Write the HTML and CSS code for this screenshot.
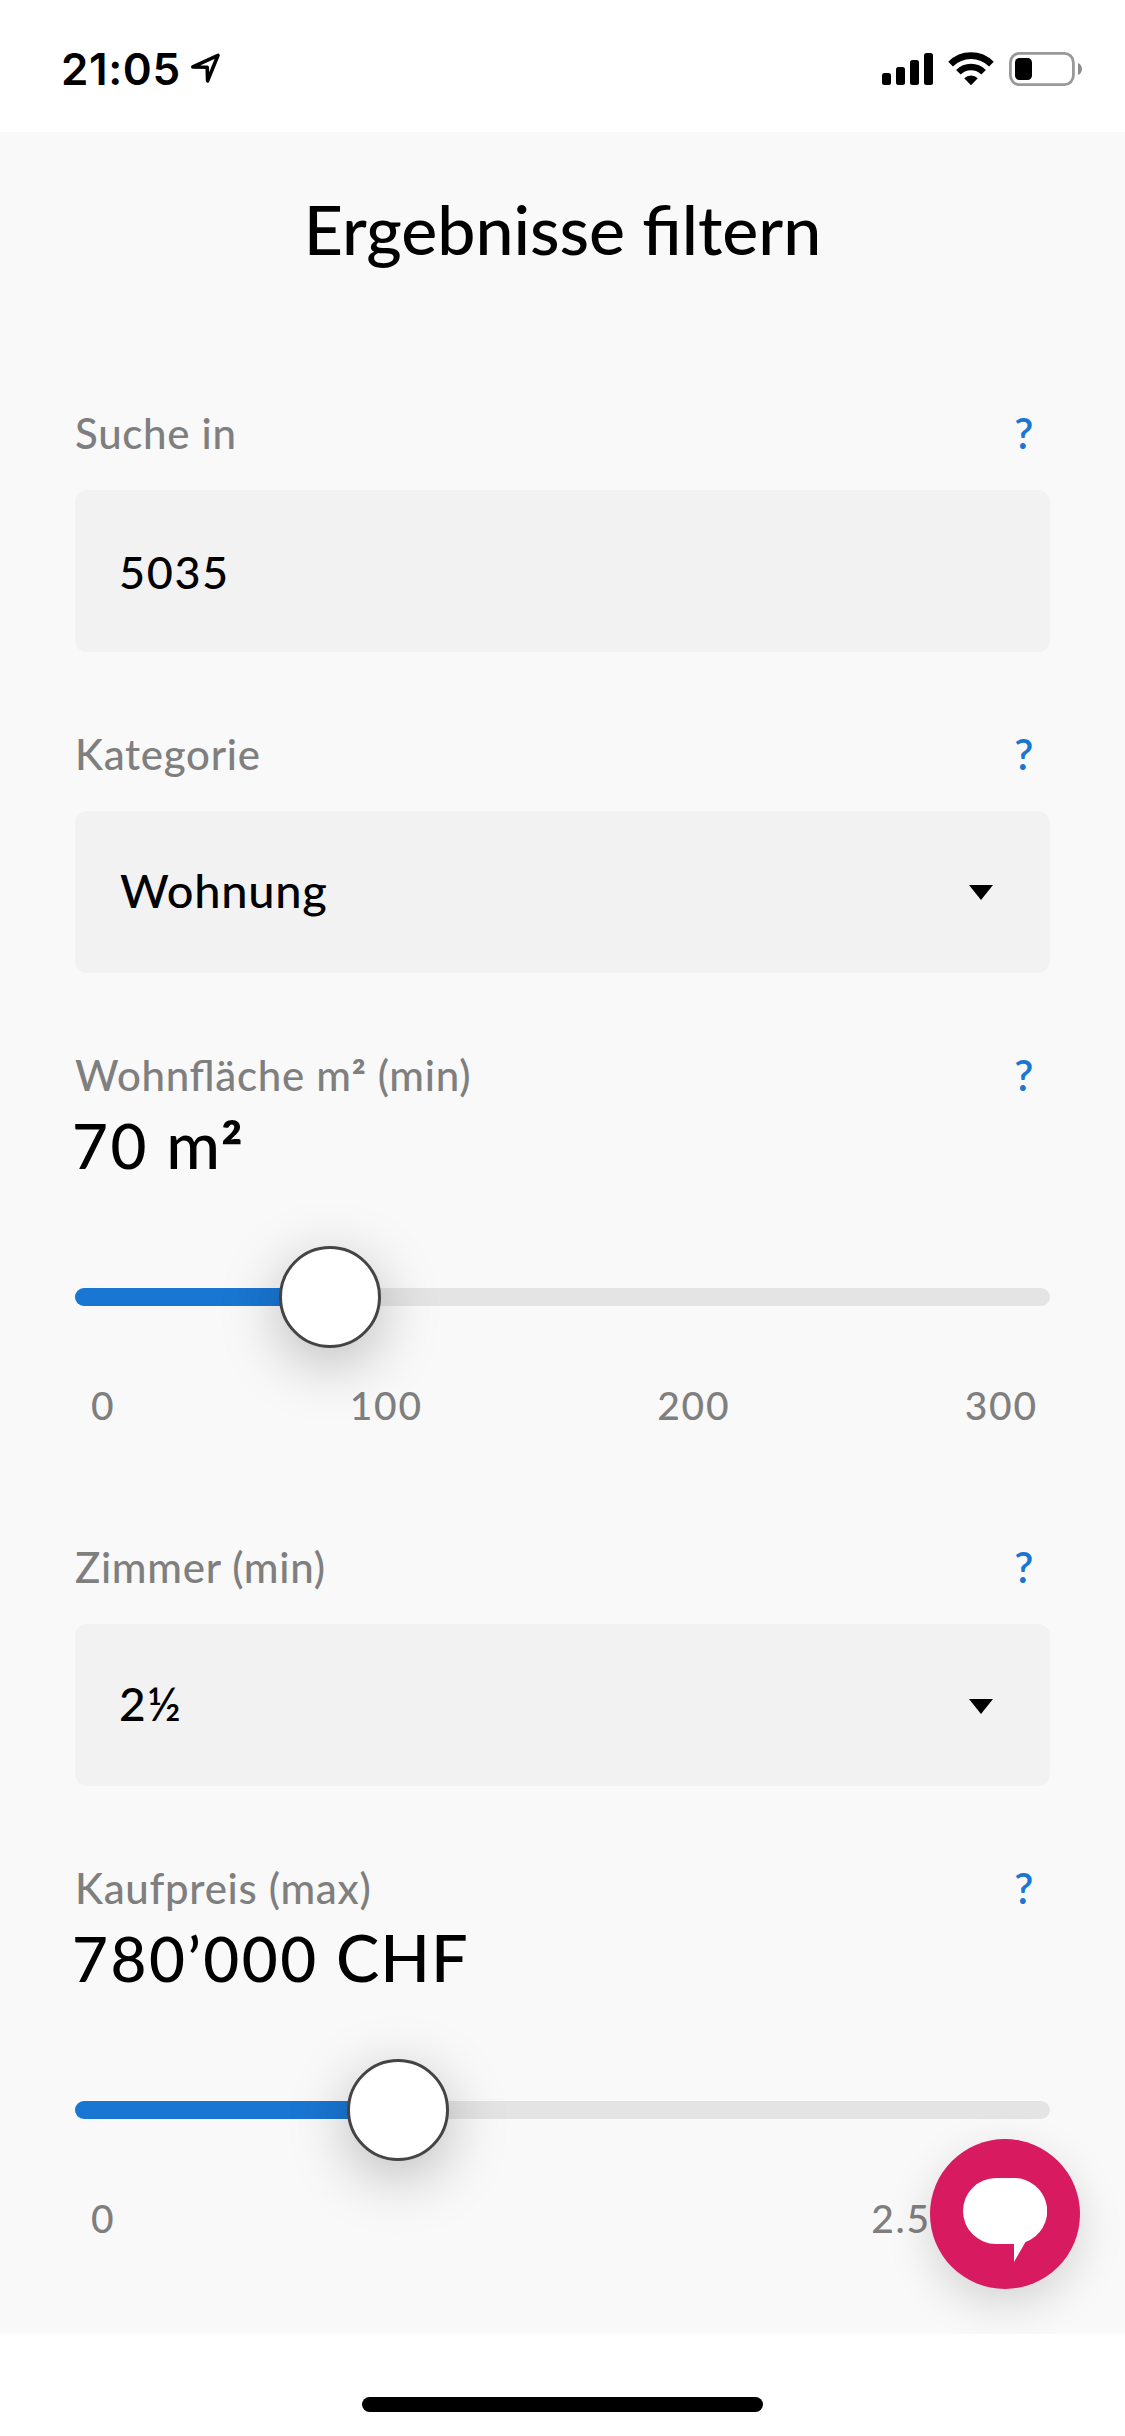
FILE: index.html
```
<!DOCTYPE html>
<html lang="de">
<head>
<meta charset="utf-8">
<title>Ergebnisse filtern</title>
<link rel="stylesheet" href="styles.css">
</head>
<body>
<header class="status">
  <div class="status-left">
    <span class="time">21:05</span>
    <svg class="location" width="30" height="30" viewBox="0 0 30 30"><path d="M1.8 13.9 27 2.4 16.6 27.8 16.2 14.2z" fill="none" stroke="#000" stroke-width="3.6" stroke-linejoin="round"/></svg>
  </div>
  <div class="status-right">
    <svg width="51" height="33" viewBox="0 0 51 33"><rect x="0" y="21" width="9" height="12" rx="2.5"/><rect x="14" y="15" width="9" height="18" rx="2.5"/><rect x="28" y="8" width="9" height="25" rx="2.5"/><rect x="42" y="1" width="9" height="32" rx="2.5"/></svg>
    <svg width="46" height="33" viewBox="0 0 46 33"><g fill="none" stroke="#000"><path d="M2.6 12.1a28.8 28.8 0 0 1 40.8 0" stroke-width="6.6"/><path d="M10.4 20.2a17.8 17.8 0 0 1 25.2 0" stroke-width="6.4"/></g><path d="M16.2 26.3a9.6 9.6 0 0 1 13.6 0L23 33.3z"/></svg>
    <svg width="73" height="34" viewBox="0 0 73 34"><rect x="1.4" y="1.4" width="63" height="31.2" rx="9" fill="none" stroke="#999" stroke-width="2.8"/><rect x="6" y="6" width="17" height="22" rx="4.5"/><path d="M69 11c5.3 2 5.3 10 0 12z" fill="#8c8c8c"/></svg>
  </div>
</header>

<main class="filters">
  <h1 class="title">Ergebnisse filtern</h1>

  <section class="field">
    <div class="label-row"><span>Suche in</span><a class="help">?</a></div>
    <div class="box code">5035</div>
  </section>

  <section class="field">
    <div class="label-row"><span>Kategorie</span><a class="help">?</a></div>
    <div class="box">Wohnung<svg class="caret" width="24" height="15" viewBox="0 0 24 15"><path d="M0 0h24L12 15z"/></svg></div>
  </section>

  <section class="field range">
    <div class="label-row"><span>Wohnfläche m<span class="square">²</span> (min)</span><a class="help">?</a></div>
    <div class="value"><span class="number">70</span> m<span class="square">²</span></div>
    <div class="slider"><div class="track"><div class="fill" style="width: 255px"></div></div><div class="thumb" style="left: 204px"></div></div>
    <div class="ticks"><span>0</span><span>100</span><span>200</span><span>300</span></div>
  </section>

  <section class="field">
    <div class="label-row"><span>Zimmer (min)</span><a class="help">?</a></div>
    <div class="box rooms">2½<svg class="caret" width="24" height="15" viewBox="0 0 24 15"><path d="M0 0h24L12 15z"/></svg></div>
  </section>

  <section class="field range">
    <div class="label-row"><span>Kaufpreis (max)</span><a class="help">?</a></div>
    <div class="value"><span class="number">780’000</span> CHF</div>
    <div class="slider"><div class="track"><div class="fill" style="width: 323px"></div></div><div class="thumb" style="left: 272px"></div></div>
    <div class="ticks price"><span>0</span><span>2.5</span></div>
  </section>

  <div class="chat">
    <svg width="84" height="84" viewBox="0 0 84 84"><path d="M33 0h18a33 33 0 0 1 11.500 64L51 84V66H33A33 33 0 0 1 33 0z" fill="#fff"/></svg>
  </div>
</main>

<footer class="home"><div class="home-bar"></div></footer>
</body>
</html>
```
FILE: styles.css
```
* { box-sizing: border-box; }

body {
  margin: 0;
  width: 1125px;
  height: 2436px;
  display: flex;
  flex-direction: column;
  background: #fff;
  color: #000;
  font-family: Lato, "Open Sans", sans-serif;
  font-weight: 500;
  font-feature-settings: "liga" 1;
}

.status {
  height: 132px;
  padding: 0 43px 0 61px;
  display: flex;
  justify-content: space-between;
}

.status-left { display: flex; gap: 10px; }

.time {
  font: 600 44px/54px Inter, sans-serif;
  letter-spacing: 0.6px;
  margin-top: 42px;
}

.location { margin-top: 53px; }

.status-right {
  display: flex;
  gap: 15px;
  align-items: flex-start;
  padding-top: 52px;
}

.filters {
  position: relative;
  height: 2202px;
  padding: 0 75px;
  background: #f9f9f9;
  overflow: hidden;
}

.title {
  margin: 0 0 119px;
  padding-top: 56px;
  height: 152px;
  font-size: 68px;
  line-height: 82px;
  font-weight: 500;
  text-align: center;
}

.field { margin-bottom: 72px; }
.field.range { margin-bottom: 109px; }

.label-row {
  display: flex;
  justify-content: space-between;
  padding-right: 16px;
  font-size: 42px;
  line-height: 60px;
  letter-spacing: 0.7px;
  color: #7f7f7f;
}

.help { color: #1976d2; font-weight: 600; }

.square {
  position: relative;
  top: 0.07em;
  font-weight: 700;
}

.box {
  margin-top: 27px;
  height: 162px;
  padding: 0 57px 4px 45px;
  display: flex;
  align-items: center;
  justify-content: space-between;
  border-radius: 12px;
  background: #f2f2f2;
  font-size: 47px;
  letter-spacing: 0.7px;
}

.box.code { font-size: 45px; letter-spacing: 1.6px; padding: 1px 45px 0 44px; }
.box.rooms { font-size: 46px; letter-spacing: 1.6px; padding-left: 44px; padding-bottom: 3px; }

.caret { margin-top: 5px; }

.value {
  margin: 3px 0 66px -3px;
  height: 72px;
  font-size: 65px;
  line-height: 72px;
  letter-spacing: 1px;
}

.number { font-size: 62px; letter-spacing: 2.5px; }

.slider {
  position: relative;
  height: 102px;
  display: flex;
  align-items: center;
}

.track {
  flex: 1;
  height: 18px;
  border-radius: 9px;
  background: #e4e4e4;
  overflow: hidden;
}

.fill {
  height: 18px;
  background: #1976d2;
}

.thumb {
  position: absolute;
  top: 0;
  width: 102px;
  height: 102px;
  border: 3px solid #444;
  border-radius: 50%;
  background: #fff;
  box-shadow: 0 15px 60px rgba(0, 0, 0, 0.25);
}

.ticks {
  margin-top: 34px;
  padding: 0 12px 0 16px;
  display: flex;
  justify-content: space-between;
  font-size: 39px;
  line-height: 46px;
  letter-spacing: 1.8px;
  color: #7f7f7f;
}

.ticks.price { padding-right: 119px; }

.chat {
  position: absolute;
  right: 45px;
  top: 2007px;
  width: 150px;
  height: 150px;
  padding: 39px 33px;
  border-radius: 50%;
  background: #d81b60;
  box-shadow: 0 15px 45px rgba(0, 0, 0, 0.15);
}

.home {
  flex: 1;
  display: flex;
  justify-content: center;
  align-items: flex-start;
  padding-top: 63px;
}

.home-bar {
  width: 401px;
  height: 15px;
  border-radius: 8px;
  background: #000;
}
```
